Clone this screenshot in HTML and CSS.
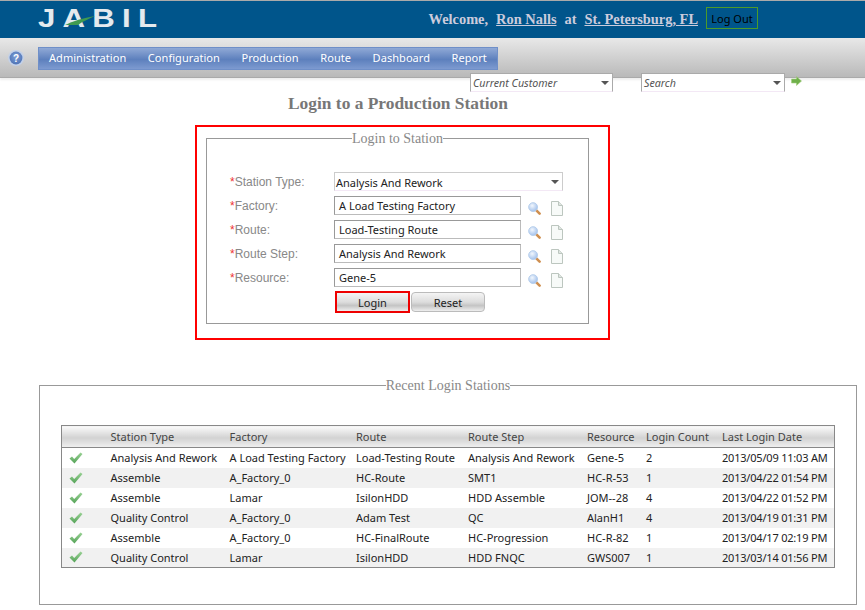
FILE: index.html
```html
<!DOCTYPE html>
<html lang="en">
<head>
  <meta charset="UTF-8">
  <meta name="viewport" content="width=device-width, initial-scale=1.0">
  <title>Login to a Production Station</title>
  <link rel="stylesheet" href="styles.css">
</head>
<body>

<svg class="sprites" width="0" height="0">
  <defs>
    <radialGradient id="lens" cx="40%" cy="35%" r="70%">
      <stop offset="0" stop-color="#f2f7fd"/>
      <stop offset="1" stop-color="#9dbdea"/>
    </radialGradient>
    <radialGradient id="helpball" cx="50%" cy="40%" r="60%">
      <stop offset="0" stop-color="#7f9fd6"/>
      <stop offset="1" stop-color="#4f74b6"/>
    </radialGradient>
    <linearGradient id="tick" x1="0" y1="0" x2="0" y2="1">
      <stop offset="0" stop-color="#9ad295"/>
      <stop offset="1" stop-color="#55a358"/>
    </linearGradient>
    <symbol id="icon-check" viewBox="0 0 14 12">
      <path d="M0.5 6.5 L3 4.5 L5.2 7 L11.5 0.5 L13.5 2 L5.5 11.5 Z" fill="url(#tick)"/>
    </symbol>
    <symbol id="icon-search" viewBox="0 0 14 14">
      <path d="M9 9 L12.5 12.5" stroke="#cf8f50" stroke-width="2.8" stroke-linecap="round"/>
      <circle cx="5.5" cy="5.5" r="4.8" fill="url(#lens)" stroke="#b4cdec" stroke-width="1"/>
    </symbol>
    <symbol id="icon-doc" viewBox="0 0 13 15">
      <path d="M1.5 0.5 H8.5 L12.5 4.5 V14.5 H1.5 Z" fill="#f7faf8" stroke="#bcc6bf"/>
      <path d="M8.5 0.5 V4.5 H12.5" fill="#dfe5e1" stroke="#bcc6bf"/>
    </symbol>
  </defs>
</svg>

<div class="topbar">
  <div class="logo">
    <span class="logo-text">JABIL</span>
    <svg class="logo-swoosh" width="30" height="9" viewBox="0 0 30 9">
      <path d="M0 9 C8 5 18 2 30 0 C24 3 18 5 13 9 Z" fill="#3f9a50"/>
    </svg>
  </div>
  <div class="welcome">
    <span>Welcome,</span>
    <a href="#">Ron Nalls</a>
    <span>at</span>
    <a href="#">St. Petersburg, FL</a>
    <button class="logout">Log Out</button>
  </div>
</div>

<div class="navbar">
  <svg class="help" width="16" height="16" viewBox="0 0 16 16">
    <circle cx="8" cy="8" r="8" fill="#c3d1e8"/>
    <circle cx="8" cy="8" r="6.4" fill="url(#helpball)"/>
    <text x="8" y="11.5" text-anchor="middle" class="help-mark">?</text>
  </svg>
  <ul class="menu">
    <li>Administration</li>
    <li>Configuration</li>
    <li>Production</li>
    <li>Route</li>
    <li>Dashboard</li>
    <li>Report</li>
  </ul>
</div>

<div class="tools">
  <div class="tool-select customer">Current Customer<span class="caret"></span></div>
  <div class="tool-select search">Search<span class="caret"></span></div>
  <svg class="go" width="11" height="10" viewBox="0 0 11 10">
    <path d="M0.5 3 H5.5 V0.5 L10.5 5 L5.5 9.5 V7 H0.5 Z" fill="#6fb04a" stroke="#a5cf7f" stroke-width="0.6"/>
  </svg>
</div>

<h1 class="page-title">Login to a Production Station</h1>

<div class="login-box">
  <fieldset class="panel login-panel">
    <legend>Login to Station</legend>
    <div class="form-row">
      <label><span class="req">*</span>Station Type:</label>
      <div class="select-field">Analysis And Rework<span class="caret"></span></div>
    </div>
    <div class="form-row">
      <label><span class="req">*</span>Factory:</label>
      <div class="text-field">A Load Testing Factory</div>
      <svg class="ico-search"><use href="#icon-search"/></svg>
      <svg class="ico-doc"><use href="#icon-doc"/></svg>
    </div>
    <div class="form-row">
      <label><span class="req">*</span>Route:</label>
      <div class="text-field">Load-Testing Route</div>
      <svg class="ico-search"><use href="#icon-search"/></svg>
      <svg class="ico-doc"><use href="#icon-doc"/></svg>
    </div>
    <div class="form-row">
      <label><span class="req">*</span>Route Step:</label>
      <div class="text-field">Analysis And Rework</div>
      <svg class="ico-search"><use href="#icon-search"/></svg>
      <svg class="ico-doc"><use href="#icon-doc"/></svg>
    </div>
    <div class="form-row">
      <label><span class="req">*</span>Resource:</label>
      <div class="text-field">Gene-5</div>
      <svg class="ico-search"><use href="#icon-search"/></svg>
      <svg class="ico-doc"><use href="#icon-doc"/></svg>
    </div>
    <div class="form-buttons">
      <button class="btn btn-login">Login</button>
      <button class="btn">Reset</button>
    </div>
  </fieldset>
</div>

<fieldset class="panel recent-panel">
  <legend>Recent Login Stations</legend>
  <table class="recent">
    <thead>
      <tr>
        <th class="c-icon"></th>
        <th class="c-type">Station Type</th>
        <th class="c-factory">Factory</th>
        <th class="c-route">Route</th>
        <th class="c-step">Route Step</th>
        <th class="c-res">Resource</th>
        <th class="c-count">Login Count</th>
        <th>Last Login Date</th>
      </tr>
    </thead>
    <tbody>
      <tr>
        <td><svg class="ico-check"><use href="#icon-check"/></svg></td>
        <td>Analysis And Rework</td><td>A Load Testing Factory</td><td>Load-Testing Route</td>
        <td>Analysis And Rework</td><td>Gene-5</td><td>2</td><td>2013/05/09 11:03 AM</td>
      </tr>
      <tr>
        <td><svg class="ico-check"><use href="#icon-check"/></svg></td>
        <td>Assemble</td><td>A_Factory_0</td><td>HC-Route</td>
        <td>SMT1</td><td>HC-R-53</td><td>1</td><td>2013/04/22 01:54 PM</td>
      </tr>
      <tr>
        <td><svg class="ico-check"><use href="#icon-check"/></svg></td>
        <td>Assemble</td><td>Lamar</td><td>IsilonHDD</td>
        <td>HDD Assemble</td><td>JOM--28</td><td>4</td><td>2013/04/22 01:52 PM</td>
      </tr>
      <tr>
        <td><svg class="ico-check"><use href="#icon-check"/></svg></td>
        <td>Quality Control</td><td>A_Factory_0</td><td>Adam Test</td>
        <td>QC</td><td>AlanH1</td><td>4</td><td>2013/04/19 01:31 PM</td>
      </tr>
      <tr>
        <td><svg class="ico-check"><use href="#icon-check"/></svg></td>
        <td>Assemble</td><td>A_Factory_0</td><td>HC-FinalRoute</td>
        <td>HC-Progression</td><td>HC-R-82</td><td>1</td><td>2013/04/17 02:19 PM</td>
      </tr>
      <tr>
        <td><svg class="ico-check"><use href="#icon-check"/></svg></td>
        <td>Quality Control</td><td>Lamar</td><td>IsilonHDD</td>
        <td>HDD FNQC</td><td>GWS007</td><td>1</td><td>2013/03/14 01:56 PM</td>
      </tr>
    </tbody>
  </table>
</fieldset>

</body>
</html>
```

FILE: styles.css
```css
* {
  box-sizing: border-box;
}
html, body {
  height: 610px;
  overflow: hidden;
}
body {
  margin: 0;
  background-color: #fff;
  font-family: "Noto Sans", sans-serif;
  font-size: 11px;
  color: #222;
}
.sprites {
  display: block;
  height: 0;
}

/* top bar */
.topbar {
  height: 38px;
  border-top: 1px solid #aaa;
  background-color: #00558b;
  display: flex;
  justify-content: space-between;
  align-items: flex-start;
  padding: 0 107px 0 38px;
}
.logo {
  position: relative;
  width: 122px;
}
.logo-text {
  display: block;
  font-family: "Liberation Sans", sans-serif;
  font-size: 26px;
  font-weight: bold;
  line-height: 34px;
  letter-spacing: 6px;
  transform: scaleX(1.2);
  transform-origin: left;
  color: #e4eaee;
}
.logo-swoosh {
  position: absolute;
  left: 27px;
  top: 15px;
}
.welcome {
  display: flex;
  align-items: center;
  gap: 8px;
  height: 34px;
  font-family: "Liberation Serif", serif;
  font-size: 14.4px;
  font-weight: bold;
  color: #ccd;
}
.welcome span, .welcome a {
  padding-top: 3px;
}
.welcome a {
  color: #ccd;
}
.logout {
  width: 52px;
  height: 22px;
  padding: 0;
  border: 1px solid #4c9a2a;
  background: none;
  color: #000;
  font-family: "Noto Sans", sans-serif;
  font-size: 11px;
}

/* nav */
.navbar {
  height: 40px;
  background: linear-gradient(#e8e8e8, #b9b9b9);
  border-bottom: 1px solid #aaa;
  box-shadow: 0 2px 2px #eee;
  display: flex;
  align-items: flex-start;
  padding: 9px 0 0 8px;
}
.help {
  margin: 3px 14px 0 0;
}
.help-mark {
  font-family: "Liberation Sans", sans-serif;
  font-size: 10px;
  font-weight: bold;
  fill: #fff;
}
.menu {
  list-style: none;
  margin: 0;
  padding: 0 0 2px;
  width: 460px;
  height: 23px;
  display: flex;
  align-items: center;
  border: 1px solid #6f8fc8;
  background: linear-gradient(#90a9d6, #5d80bd 55%, #7d9ad0);
  color: #fff;
}
.menu li {
  padding: 0 10.8px;
  font-size: 11px;
  letter-spacing: 0.05px;
}
.menu li:first-child {
  padding-left: 10px;
}

/* customer and search selects, they hang over the nav edge */
.tools {
  display: flex;
  align-items: flex-start;
  margin: -5px 0 0 470px;
  height: 20px;
  position: relative;
}
.tool-select {
  position: relative;
  height: 19px;
  line-height: 19px;
  padding-left: 2px;
  background-color: #fff;
  border: 1px solid #aaa;
  border-bottom-color: #f3e8f5;
  font-style: italic;
  font-size: 10.7px;
  color: #555;
}
.customer {
  width: 143px;
  margin-right: 28px;
}
.search {
  width: 144px;
  margin-right: 6px;
}
.go {
  margin-top: 3px;
}
.caret {
  position: absolute;
  right: 3px;
  top: 7px;
  border-left: 4px solid transparent;
  border-right: 4px solid transparent;
  border-top: 4px solid #555;
}

.page-title {
  width: 796px;
  margin: 0 0 12px;
  text-align: center;
  font-family: "Liberation Serif", serif;
  font-size: 17.4px;
  line-height: 20px;
  color: #777;
}

/* panels */
.panel {
  margin: 0;
  padding: 0;
  min-width: 0;
  border: 1px solid #999;
}
.panel legend {
  margin: 0 auto;
  padding: 2px 0 0;
  font-family: "Liberation Serif", serif;
  font-size: 14px;
  line-height: 16px;
  color: #888;
}

/* login form */
.login-box {
  width: 415px;
  height: 215px;
  margin-left: 195px;
  padding: 2px 9px 0;
  border: 2px solid #f00;
}
.login-panel {
  width: 383px;
  height: 195px;
  padding-top: 22px;
}
.form-row {
  display: flex;
  align-items: center;
  height: 24px;
  margin-left: 23px;
}
.form-row label {
  width: 104px;
  font-family: "Liberation Sans", sans-serif;
  font-size: 12px;
  color: #888;
  margin-top: 1px;
}
.req {
  color: #e33;
}
.select-field {
  position: relative;
  width: 229px;
  height: 19px;
  line-height: 19px;
  padding-left: 1px;
  border: 1px solid #ccc;
  border-bottom-color: #f3e8f5;
}
.text-field {
  width: 187px;
  height: 19px;
  line-height: 17px;
  padding-left: 4px;
  border: 1px solid #999;
  border-right-color: #bbb;
  border-bottom-color: #bbb;
}
.ico-search {
  width: 13px;
  height: 13px;
  margin: 7px 0 0 7px;
}
.ico-doc {
  width: 13px;
  height: 15px;
  margin: 7px 0 0 9px;
}
.form-buttons {
  display: flex;
  align-items: center;
  gap: 1px;
  margin: 2px 0 0 128px;
}
.btn {
  width: 74px;
  height: 20px;
  padding: 0;
  border: 1px solid #bbb;
  border-radius: 4px;
  background: linear-gradient(#f4f4f4, #ddd 50%, #c4c4c4 70%, #eee);
  color: #222;
  font-family: "Noto Sans", sans-serif;
  font-size: 11px;
}
.btn-login {
  width: 75px;
  height: 22px;
  border: 2px solid #e00;
  border-radius: 0;
}

/* recent table */
.recent-panel {
  width: 818px;
  height: 229px;
  margin: 36px 0 0 39px;
  padding-top: 31px;
}
.recent {
  width: 774px;
  margin-left: 21px;
  border-collapse: collapse;
  border: 1px solid #888;
  table-layout: fixed;
}
.recent th {
  height: 22px;
  padding: 0;
  text-align: left;
  font-weight: normal;
  color: #444;
  border-bottom: 1px solid #888;
  background: linear-gradient(#fafafa, #d2d2d2 55%, #f0f0f0);
}
.recent td {
  height: 20px;
  padding: 0;
  white-space: nowrap;
}
.recent td:last-child {
  letter-spacing: -0.2px;
}
.recent tbody tr:nth-child(even) {
  background-color: #f1f1f1;
}
.c-icon { width: 49px; }
.c-type { width: 119px; }
.c-factory { width: 126.5px; }
.c-route { width: 112px; }
.c-step { width: 119px; }
.c-res { width: 59px; }
.c-count { width: 76px; }
.ico-check {
  display: block;
  width: 14px;
  height: 12px;
  margin-left: 7px;
}
```
